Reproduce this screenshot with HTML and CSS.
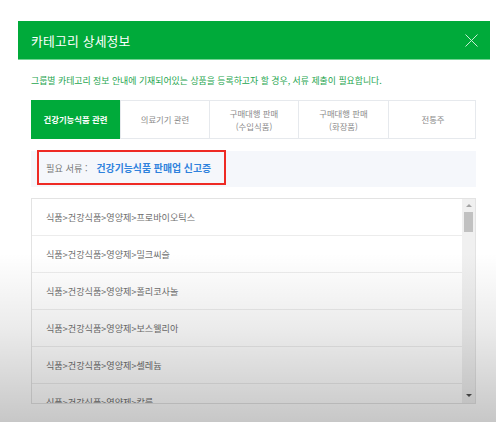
FILE: index.html
```html
<!DOCTYPE html>
<html lang="ko">
<head>
<meta charset="utf-8">
<title>카테고리 상세정보</title>
<link rel="stylesheet" href="styles.css">
</head>
<body>
<div class="dialog">
  <div class="dialog-header">
    <h1 class="dialog-title">카테고리 상세정보</h1>
    <button class="close-btn" aria-label="닫기">
      <svg width="13" height="13" viewBox="0 0 13 13"><path d="M0.5 0.5 L12.5 12.5 M12.5 0.5 L0.5 12.5" stroke="#c9ecd4" stroke-width="1" fill="none"/></svg>
    </button>
  </div>
  <div class="dialog-body">
    <p class="desc">그룹별 카테고리 정보 안내에 기재되어있는 상품을 등록하고자 할 경우, 서류 제출이 필요합니다.</p>
    <div class="tabs">
      <div class="tab active">건강기능식품 관련</div>
      <div class="tab">의료기기 관련</div>
      <div class="tab">구매대행 판매<br>(수입식품)</div>
      <div class="tab">구매대행 판매<br>(화장품)</div>
      <div class="tab">전통주</div>
    </div>
    <div class="info">
      <div class="highlight">
        <span class="info-label">필요 서류 :</span>
        <span class="info-value">건강기능식품 판매업 신고증</span>
      </div>
    </div>
    <div class="list">
      <ul class="rows">
        <li class="row">식품&gt;건강식품&gt;영양제&gt;프로바이오틱스</li>
        <li class="row">식품&gt;건강식품&gt;영양제&gt;밀크씨슬</li>
        <li class="row">식품&gt;건강식품&gt;영양제&gt;폴리코사놀</li>
        <li class="row">식품&gt;건강식품&gt;영양제&gt;보스웰리아</li>
        <li class="row">식품&gt;건강식품&gt;영양제&gt;셀레늄</li>
        <li class="row">식품&gt;건강식품&gt;영양제&gt;칼륨</li>
      </ul>
      <div class="scrollbar">
        <span class="arrow up"></span>
        <span class="thumb"></span>
        <span class="track-fill"></span>
        <span class="arrow down"></span>
      </div>
    </div>
  </div>
</div>
<div class="shade"></div>
</body>
</html>
```

FILE: styles.css
```css
* { box-sizing: border-box; }
html, body { margin: 0; padding: 0; }
body {
  width: 496px;
  height: 422px;
  overflow: hidden;
  background: #ffffff;
  font-family: "Noto Sans CJK KR", "Noto Sans", sans-serif;
  position: relative;
}
.dialog {
  margin: 21px 0 0 18px;
  width: 472px;
  background: #fff;
}
.dialog-header {
  height: 39px;
  background: #00aa3a;
  border-bottom: 1px solid #74d394;
  display: flex;
  align-items: center;
  justify-content: space-between;
  padding: 0 12px 0 13px;
}
.dialog-title {
  margin: 0;
  color: #ffffff;
  font-size: 12.8px;
  font-weight: 400;
  letter-spacing: 0.2px;
}
.close-btn {
  border: 0;
  background: none;
  padding: 0;
  width: 14px;
  height: 14px;
  display: flex;
  align-items: center;
  justify-content: center;
}
.dialog-body {
  padding: 0 14px 0 13px;
}
.desc {
  margin: 0;
  padding-top: 15px;
  height: 40px;
  font-size: 8.9px;
  line-height: 12px;
  color: #27a650;
}
.tabs {
  display: grid;
  grid-template-columns: 88px 89px 89px 90px 89px;
  height: 39px;
  border: 1px solid #e6e9ed;
}
.tab {
  display: flex;
  align-items: center;
  justify-content: center;
  text-align: center;
  font-size: 8.4px;
  line-height: 13px;
  color: #8a8a8a;
  border-left: 1px solid #e6e9ed;
}
.tab:first-child { border-left: 0; }
.tab.active {
  background: #00aa3a;
  color: #ffffff;
  font-weight: 700;
  margin: -1px 0 -1px -1px;
}
.info {
  margin-top: 12px;
  height: 36px;
  background: #f5f7fb;
  padding-left: 6px;
  display: flex;
  align-items: flex-start;
}
.highlight {
  margin-top: -1px;
  width: 189px;
  height: 35px;
  border: 2px solid #ee2a24;
  display: flex;
  align-items: center;
  padding-left: 7px;
}
.info-label { color: #777; font-size: 9.2px; }
.info-value {
  margin-left: 9px;
  color: #2f82dd;
  font-weight: 700;
  font-size: 9.9px;
}
.list {
  margin-top: 11px;
  height: 206px;
  border: 1px solid #e3e3e3;
  display: flex;
  overflow: hidden;
}
.rows {
  list-style: none;
  margin: 0;
  padding: 0;
  flex: 1;
  overflow: hidden;
}
.row {
  height: 37px;
  border-bottom: 1px solid #ececec;
  padding-left: 14px;
  display: flex;
  align-items: center;
  font-size: 9.1px;
  color: #6e6e6e;
}
.scrollbar {
  width: 13px;
  background: #f0f0f0;
  display: flex;
  flex-direction: column;
  align-items: center;
}
.arrow {
  width: 0;
  height: 0;
  border-left: 3px solid transparent;
  border-right: 3px solid transparent;
}
.arrow.up {
  margin-top: 5px;
  border-bottom: 3px solid #a3a3a3;
}
.thumb {
  margin-top: 5px;
  width: 9px;
  height: 20px;
  background: #c1c1c1;
}
.track-fill { flex: 1; }
.arrow.down {
  margin-bottom: 6px;
  border-top: 3px solid #505050;
}
.shade {
  position: absolute;
  left: 0;
  top: 0;
  width: 100%;
  height: 100%;
  pointer-events: none;
  background: linear-gradient(to bottom, rgba(0,0,0,0) 0, rgba(0,0,0,0) 60%, rgba(0,0,0,0.08) 78%, rgba(0,0,0,0.22) 100%);
}
```
